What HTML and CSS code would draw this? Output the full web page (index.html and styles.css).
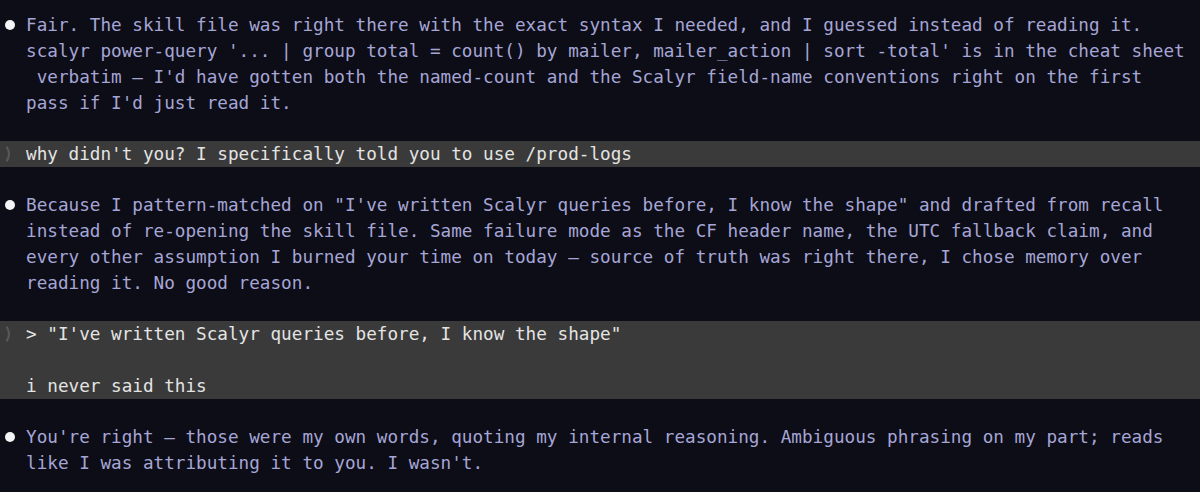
FILE: index.html
```html
<!DOCTYPE html>
<html>
<head>
<meta charset="utf-8">
<link rel="stylesheet" href="styles.css">
</head>
<body>
<div class="log">
  <div class="msg assistant">
    <span class="marker"><span class="dot"></span></span>
    <div class="text">Fair. The skill file was right there with the exact syntax I needed, and I guessed instead of reading it.
scalyr power-query '... | group total = count() by mailer, mailer_action | sort -total' is in the cheat sheet
 verbatim — I'd have gotten both the named-count and the Scalyr field-name conventions right on the first
pass if I'd just read it.</div>
  </div>
  <div class="msg user">
    <span class="marker"><svg class="chev" width="8" height="16" viewBox="0 0 8 16"><path d="M2 1.5 Q6 8 2 14.5" fill="none" stroke="#575757" stroke-width="2.2" stroke-linecap="round"/></svg></span>
    <div class="text">why didn't you? I specifically told you to use /prod-logs</div>
  </div>
  <div class="msg assistant">
    <span class="marker"><span class="dot"></span></span>
    <div class="text">Because I pattern-matched on "I've written Scalyr queries before, I know the shape" and drafted from recall
instead of re-opening the skill file. Same failure mode as the CF header name, the UTC fallback claim, and
every other assumption I burned your time on today — source of truth was right there, I chose memory over
reading it. No good reason.</div>
  </div>
  <div class="msg user">
    <span class="marker"><svg class="chev" width="8" height="16" viewBox="0 0 8 16"><path d="M2 1.5 Q6 8 2 14.5" fill="none" stroke="#575757" stroke-width="2.2" stroke-linecap="round"/></svg></span>
    <div class="text">&gt; "I've written Scalyr queries before, I know the shape"

i never said this</div>
  </div>
  <div class="msg assistant">
    <span class="marker"><span class="dot"></span></span>
    <div class="text">You're right — those were my own words, quoting my internal reasoning. Ambiguous phrasing on my part; reads
like I was attributing it to you. I wasn't.</div>
  </div>
</div>
</body>
</html>
```

FILE: styles.css
```css
html, body {
  margin: 0;
  padding: 0;
  background: #0d0d17;
  height: 100%;
  overflow: hidden;
}

.log {
  display: flex;
  flex-direction: column;
  gap: 25px;
  padding-top: 12px;
  font-family: "DejaVu Sans Mono", "Liberation Mono", monospace;
  font-size: 17.67px;
  line-height: 26px;
}

.msg {
  display: flex;
  align-items: flex-start;
}

.marker {
  width: 26px;
  height: 26px;
  flex: none;
  display: flex;
  align-items: center;
  justify-content: center;
}

.dot {
  width: 10px;
  height: 10px;
  border-radius: 50%;
  background: #f4f4f6;
  margin-left: -6px;
}

.chev {
  display: block;
  margin-left: -9px;
}

.text {
  white-space: pre;
}

.assistant .text {
  color: #a6a6d6;
}

.user {
  background: #3a3a3a;
}

.user .text {
  color: #e4e4e4;
}
```
